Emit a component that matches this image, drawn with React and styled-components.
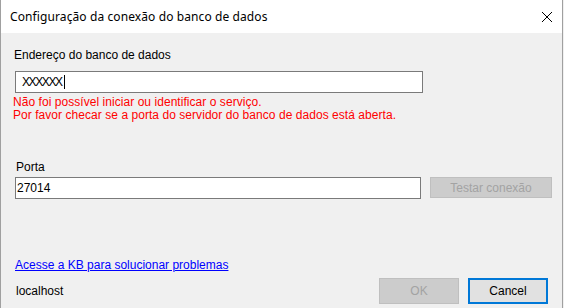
import React from "react";
import styled, { createGlobalStyle } from "styled-components";

const Global = createGlobalStyle`
  html, body { margin: 0; padding: 0; background: #f0f0f0; }
  body { width: 564px; height: 308px; overflow: hidden; }
  * { box-sizing: border-box; }
`;

const Window = styled.div`
  width: 563px;
  height: 308px;
  display: flex;
  flex-direction: column;
  border-left: 1px solid #a0a0a0;
  border-right: 1px solid #a0a0a0;
  background: #f0f0f0;
  font-family: "Liberation Sans", Arial, sans-serif;
  font-size: 12px;
  color: #000;
`;

const TitleBar = styled.div`
  height: 33px;
  flex: none;
  background: #ffffff;
  display: flex;
  align-items: center;
  justify-content: space-between;
  padding: 0 9px 0 9px;
`;

const Title = styled.div`
  font-family: "Noto Sans", "Segoe UI", sans-serif;
  font-size: 12px;
  letter-spacing: 0.1px;
  color: #000;
`;

const CloseIcon = styled.svg`
  width: 12px;
  height: 12px;
`;

const Body = styled.div`
  flex: 1;
  display: flex;
  flex-direction: column;
  padding: 15px 0 4px 12px;
`;

const Label = styled.div`
  line-height: 14px;
  margin-left: ${(p) => p.$indent || 0}px;
  margin-top: ${(p) => p.$top || 0}px;
`;

const TextBox = styled.div`
  width: ${(p) => p.$w}px;
  height: 22px;
  background: #fff;
  border: 1px solid #7a7a7a;
  display: flex;
  align-items: center;
  padding-left: ${(p) => p.$pad}px;
  margin-left: ${(p) => p.$indent || 0}px;
  margin-top: ${(p) => p.$top || 0}px;
  line-height: 14px;
`;

const Masked = styled.span`
  letter-spacing: -1.4px;
`;

const Caret = styled.span`
  display: inline-block;
  width: 1px;
  height: 14px;
  background: #000;
  margin-left: 2px;
`;

const ErrorText = styled.div`
  color: #ff0000;
  line-height: 13px;
  margin-top: 3px;
  letter-spacing: 0.05px;
`;

const Row = styled.div`
  display: flex;
  align-items: flex-start;
  gap: ${(p) => p.$gap || 9}px;
  margin-left: ${(p) => p.$indent || 0}px;
  margin-top: ${(p) => p.$top || 0}px;
`;

const Button = styled.div`
  width: ${(p) => p.$w}px;
  height: ${(p) => p.$h}px;
  display: flex;
  align-items: center;
  justify-content: center;
  background: ${(p) => (p.$disabled ? "#cccccc" : "#e1e1e1")};
  border: ${(p) =>
    p.$focused ? "2px solid #0078d7" : p.$disabled ? "1px solid #bfbfbf" : "1px solid #adadad"};
  color: ${(p) => (p.$disabled ? "#a3a3a3" : "#000")};
`;

const Spacer = styled.div`
  flex: 1;
`;

const Link = styled.a`
  color: #0000ff;
  text-decoration: underline;
  line-height: 14px;
  margin-left: 2px;
  align-self: flex-start;
`;

const Footer = styled.div`
  display: flex;
  align-items: center;
  margin-top: 6px;
  padding-right: 14px;
`;

const Status = styled.div`
  flex: 1;
  margin-left: 3px;
  line-height: 14px;
`;

const Buttons = styled.div`
  display: flex;
  gap: 9px;
`;

export default function App() {
  return (
    <>
      <Global />
      <Window>
        <TitleBar>
          <Title>Configuração da conexão do banco de dados</Title>
          <CloseIcon viewBox="0 0 12 12">
            <path d="M1 1 L11 11 M11 1 L1 11" stroke="#000" strokeWidth="1" fill="none" />
          </CloseIcon>
        </TitleBar>
        <Body>
          <Label $indent={1}>Endereço do banco de dados</Label>
          <TextBox $w={408} $pad={6} $indent={2} $top={9}>
            <Masked>XXXXXX</Masked>
            <Caret />
          </TextBox>
          <ErrorText>
            Não foi possível iniciar ou identificar o serviço.
            <br />
            Por favor checar se a porta do servidor do banco de dados está aberta.
          </ErrorText>
          <Label $indent={3} $top={38}>Porta</Label>
          <Row $indent={2} $top={3} $gap={9}>
            <TextBox $w={406} $pad={1}>27014</TextBox>
            <Button $w={122} $h={21} $disabled>Testar conexão</Button>
          </Row>
          <Spacer />
          <Link>Acesse a KB para solucionar problemas</Link>
          <Footer>
            <Status>localhost</Status>
            <Buttons>
              <Button $w={80} $h={26} $disabled>OK</Button>
              <Button $w={80} $h={26} $focused>Cancel</Button>
            </Buttons>
          </Footer>
        </Body>
      </Window>
    </>
  );
}
